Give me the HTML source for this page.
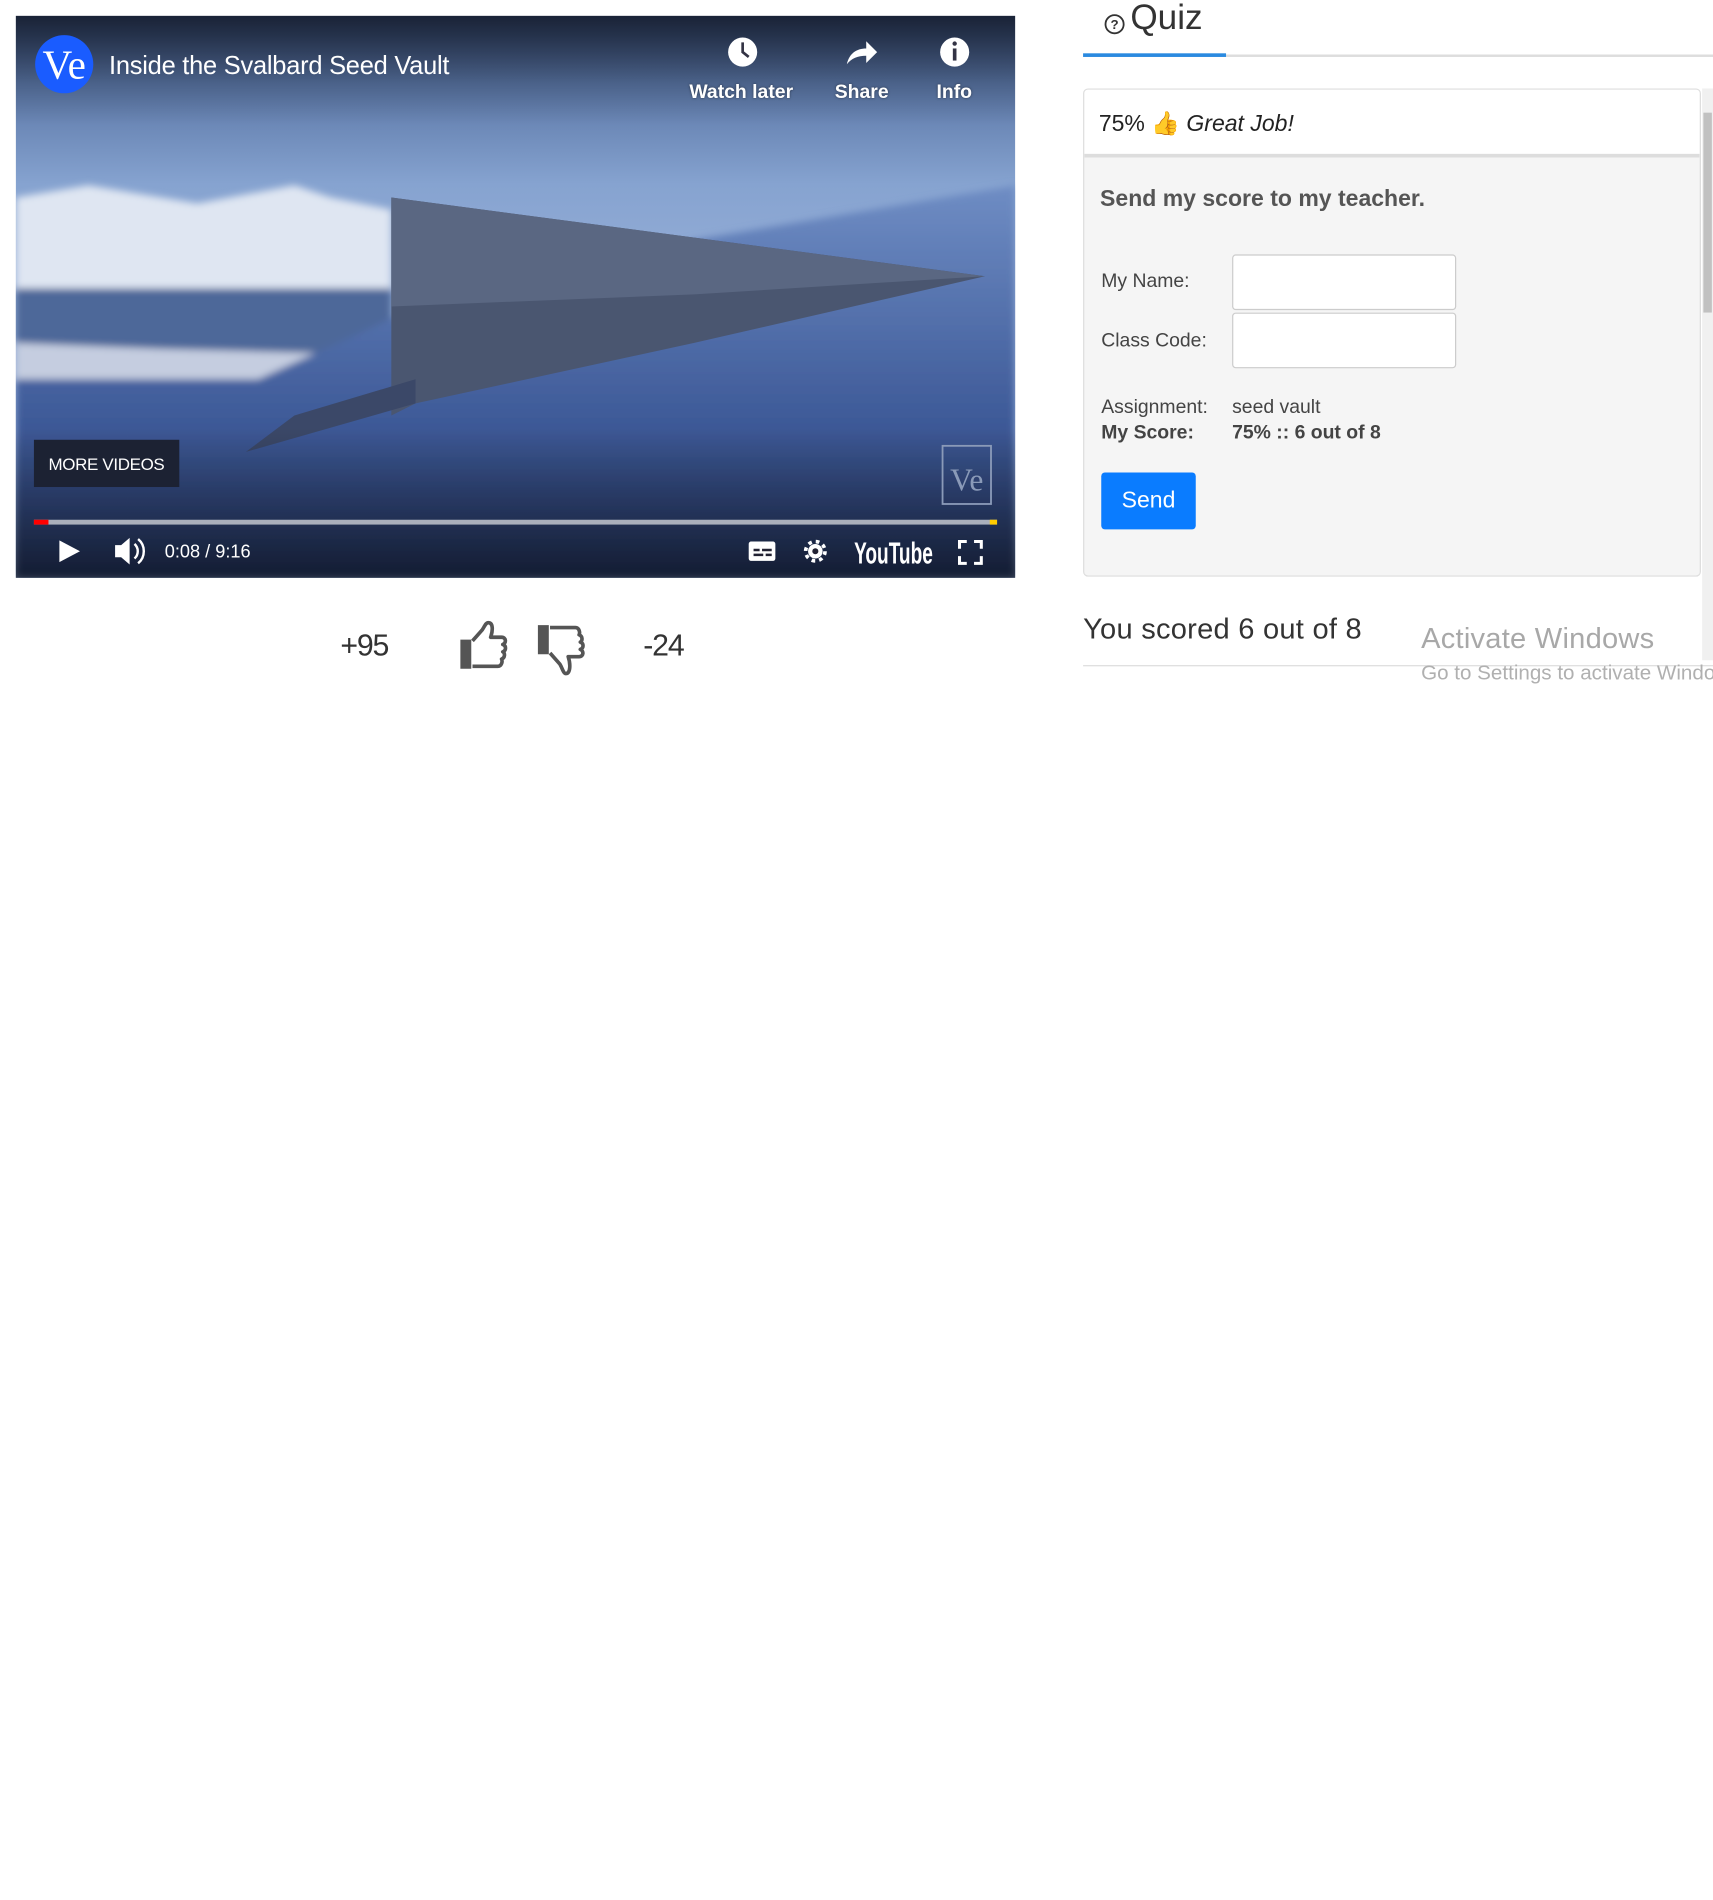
<!DOCTYPE html>
<html><head><meta charset="utf-8"><style>
html,body{margin:0;padding:0;background:#fff;width:1713px;height:1900px;overflow:hidden}
#w{position:absolute;left:0;top:0;width:1414px;height:1568px;transform:scale(1.2115);transform-origin:0 0;font-family:"Liberation Sans",Arial,sans-serif}
.a{position:absolute;white-space:nowrap}
.wt{color:#fff;font-weight:bold;font-size:16px;text-shadow:0 0 2px rgba(0,0,0,.5)}
input{position:absolute;border:1px solid #ccc;border-radius:3px;background:#fff;box-sizing:border-box}
</style></head><body><div id="w">
<svg class="a" style="left:13px;top:13px" width="825" height="464" viewBox="0 0 825 464">
<defs>
<linearGradient id="sky" x1="0" y1="0" x2="0" y2="1"><stop offset="0" stop-color="#2e3f63"/><stop offset=".12" stop-color="#5a76a6"/><stop offset=".3" stop-color="#86a3d0"/><stop offset=".45" stop-color="#93acd6"/></linearGradient>
<linearGradient id="snow" x1="0" y1="0" x2="0" y2="1"><stop offset="0" stop-color="#6f8dc4"/><stop offset=".6" stop-color="#3e5a98"/><stop offset="1" stop-color="#2b3f70"/></linearGradient>
<linearGradient id="bot" x1="0" y1="0" x2="0" y2="1"><stop offset="0" stop-color="#000" stop-opacity="0"/><stop offset="1" stop-color="#000" stop-opacity=".55"/></linearGradient>
<linearGradient id="top" x1="0" y1="0" x2="0" y2="1"><stop offset="0" stop-color="#000" stop-opacity=".45"/><stop offset="1" stop-color="#000" stop-opacity="0"/></linearGradient>
<filter id="bl"><feGaussianBlur stdDeviation="3"/></filter>
</defs>
<rect width="825" height="464" fill="url(#sky)"/>
<g filter="url(#bl)">
<path d="M0 150 L60 140 L150 155 L230 140 L260 150 L310 160 L310 230 L0 230Z" fill="#dfe6f2"/>
<path d="M0 225 L310 225 L310 290 L0 285Z" fill="#4d6799"/>
<path d="M0 270 L120 275 L310 280 L310 300 L0 310Z" fill="#c5cde0"/>
<path d="M0 464 L0 300 L200 300 L310 250 L560 185 L825 140 L825 464Z" fill="url(#snow)"/>
</g>
<path d="M310 150 L800 215 L560 270 L330 320 L310 330Z" fill="#4a5670"/>
<path d="M310 150 L800 215 L560 230 L310 240Z" fill="#5a6782"/>
<path d="M190 360 L330 320 L330 300 L230 330Z" fill="#3b4868"/>
<rect x="0" y="340" width="825" height="124" fill="url(#bot)"/>
<rect x="0" y="0" width="825" height="90" fill="url(#top)"/>
<circle cx="40" cy="40" r="24" fill="#1a5cff"/>
<text x="40" y="52" text-anchor="middle" font-family="Liberation Serif,serif" font-size="34" fill="#fff">Ve</text>
<rect x="765" y="355" width="40" height="48" fill="none" stroke="#8a9ab8" stroke-width="1.5"/>
<text x="785" y="392" text-anchor="middle" font-family="Liberation Serif,serif" font-size="26" fill="#8a9ab8">Ve</text>
<rect x="15" y="350" width="120" height="39" fill="#1c2233"/>
<text x="75" y="375" text-anchor="middle" font-size="14" fill="#fff" font-family="Liberation Sans,sans-serif" textLength="96">MORE VIDEOS</text>
<rect x="15" y="416" width="795" height="4" fill="#aab0bc"/>
<rect x="15" y="416" width="12" height="4" fill="#f00"/>
<rect x="804" y="416" width="6" height="4" fill="#fc0"/>
<path d="M36 433 L53 442 L36 451Z" fill="#fff"/>
<path d="M82 437h5l7-6v22l-7-6h-5z" fill="#fff"/>
<path d="M98 436a8 8 0 0 1 0 12M101 432a13 13 0 0 1 0 20" stroke="#fff" stroke-width="2" fill="none"/>
<text x="123" y="447" font-size="15" fill="#fff" font-family="Liberation Sans,sans-serif">0:08 / 9:16</text>
<rect x="605" y="434" width="22" height="16" rx="2" fill="#fff"/>
<path d="M609 441h5M616 441h8M609 445h8M619 445h5" stroke="#223" stroke-width="2"/>
<circle cx="660" cy="442" r="8" fill="none" stroke="#fff" stroke-width="3" stroke-dasharray="3 3.3"/>
<circle cx="660" cy="442" r="6" fill="#fff"/><circle cx="660" cy="442" r="2.5" fill="#223"/>
<text x="692" y="452" font-size="25" font-weight="bold" fill="#fff" font-family="Liberation Sans,sans-serif" textLength="65" lengthAdjust="spacingAndGlyphs">YouTube</text>
<path d="M779 440v-6h6M791 434h6v6M797 446v6h-6M785 452h-6v-6" stroke="#fff" stroke-width="2.5" fill="none"/>
<circle cx="600" cy="30" r="12" fill="#fff"/><path d="M600 22v8l5 4" stroke="#334" stroke-width="2.2" fill="none"/>
<path d="M686 40c2-9 8-13 16-13v-6l9 9-9 9v-6c-7 0-12 2-16 7z" fill="#fff"/>
<circle cx="775" cy="30" r="12" fill="#fff"/><rect x="773.5" y="27" width="3" height="10" fill="#334"/><circle cx="775" cy="23" r="1.8" fill="#334"/>
</svg>
<div class="a" style="left:90px;top:43px;color:#fff;font-size:21px;letter-spacing:-.2px">Inside the Svalbard Seed Vault</div>
<div class="a wt" style="left:569px;top:68px">Watch later</div>
<div class="a wt" style="left:689px;top:68px">Share</div>
<div class="a wt" style="left:773px;top:68px">Info</div>

<div class="a" style="left:281px;top:519px;font-size:25px;color:#333;letter-spacing:-1px">+95</div>
<div class="a" style="left:531px;top:519px;font-size:25px;color:#333;letter-spacing:-1px">-24</div>
<svg class="a" style="left:376px;top:512px" width="110" height="50" viewBox="0 0 110 50">
<path d="M4 16h9v24H4z" fill="#555"/>
<path d="M14 17l8-9c2-3 3-6 5-6 4 0 4 6 2 12h9c4 0 4 5 1 6 3 1 3 5 0 6 2 1 2 5-1 6 1 2 0 6-3 6H14" fill="none" stroke="#555" stroke-width="3" stroke-linejoin="round"/>
<path d="M68 4h9v24h-9z" fill="#555"/>
<path d="M78 27l8 9c2 3 3 8 5 8 4 0 4-8 2-14h9c4 0 4-5 1-6 3-1 3-5 0-6 2-1 2-5-1-6 1-2 0-6-3-6H78" fill="none" stroke="#555" stroke-width="3" stroke-linejoin="round"/>
</svg>

<svg class="a" style="left:911px;top:11px" width="18" height="18"><circle cx="9" cy="9" r="7.5" fill="none" stroke="#333" stroke-width="1.5"/><text x="9" y="13" font-size="11" text-anchor="middle" fill="#333" font-weight="bold">?</text></svg>
<div class="a" style="left:933px;top:-1px;font-size:29px;color:#333">Quiz</div>
<div class="a" style="left:894px;top:45px;width:520px;height:2px;background:#ddd"></div>
<div class="a" style="left:894px;top:44px;width:118px;height:3px;background:#2a8ae0"></div>

<div class="a" style="left:894px;top:73px;width:508px;height:401px;border:1px solid #ddd;border-radius:4px;background:#f5f5f5;overflow:hidden">
<div style="height:53px;background:#fff;border-bottom:3px solid #ddd;font-size:19px;color:#222;line-height:58px;padding-left:12px">75% <span style="color:#e0a000">👍</span> <i>Great Job!</i></div>
</div>
<div class="a" style="left:908px;top:154px;font-size:19px;font-weight:bold;color:#555">Send my score to my teacher.</div>
<div class="a" style="left:909px;top:224px;font-size:16px;color:#444">My Name:</div>
<div class="a" style="left:909px;top:273px;font-size:16px;color:#444">Class Code:</div>
<input style="left:1017px;top:210px;width:185px;height:46px">
<input style="left:1017px;top:258px;width:185px;height:46px">
<div class="a" style="left:909px;top:328px;font-size:16px;color:#444">Assignment:</div>
<div class="a" style="left:1017px;top:328px;font-size:16px;color:#444">seed vault</div>
<div class="a" style="left:909px;top:349px;font-size:16px;color:#444;font-weight:bold">My Score:</div>
<div class="a" style="left:1017px;top:349px;font-size:16px;color:#444;font-weight:bold">75% :: 6 out of 8</div>
<div class="a" style="left:909px;top:390px;width:78px;height:47px;background:#0a7cff;border-radius:3px;color:#fff;font-size:19px;line-height:47px;text-align:center">Send</div>

<div class="a" style="left:894px;top:506px;font-size:24px;color:#333;letter-spacing:.2px">You scored 6 out of 8</div>
<div class="a" style="left:894px;top:549px;width:520px;height:1px;background:#ddd"></div>
<div class="a" style="left:1173px;top:514px;font-size:24px;color:#a8a8a8;letter-spacing:.2px">Activate Windows</div>
<div class="a" style="left:1173px;top:546px;font-size:17px;color:#b0b0b0;width:241px;overflow:hidden">Go to Settings to activate Windows.</div>
<div class="a" style="left:1405px;top:73px;width:9px;height:472px;background:#f0f0f0"></div>
<div class="a" style="left:1406px;top:93px;width:7px;height:165px;background:#c1c1c1"></div>
</div></body></html>
